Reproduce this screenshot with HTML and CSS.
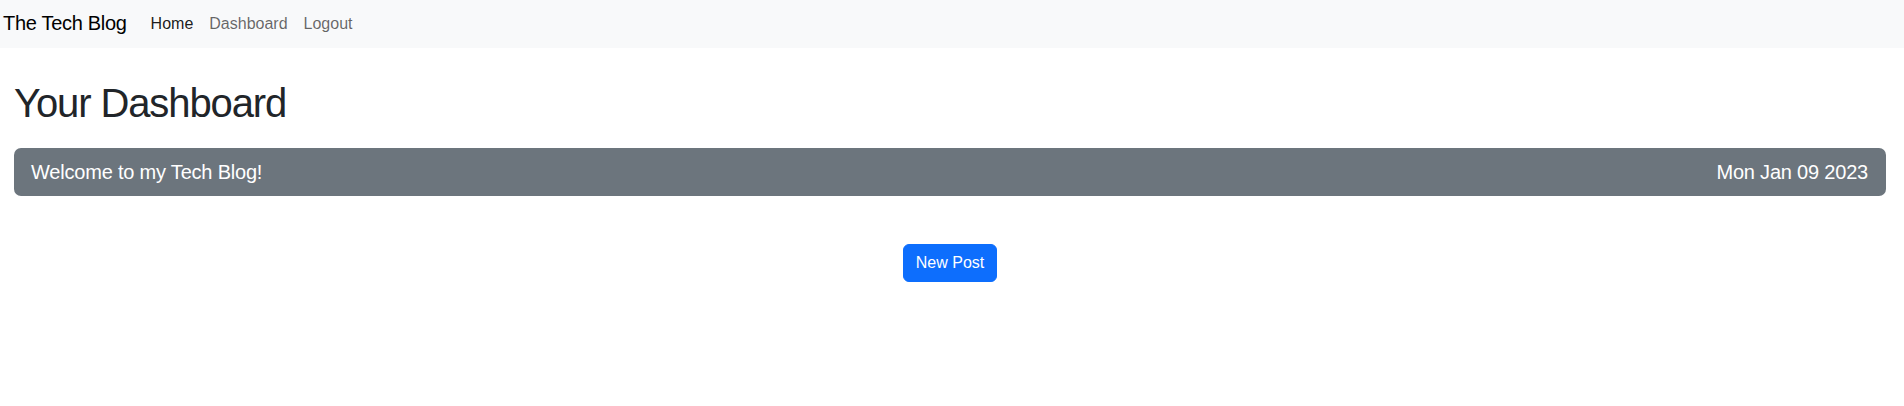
FILE: index.html
```html
<!DOCTYPE html>
<html lang="en">
<head>
<meta charset="utf-8">
<title>The Tech Blog</title>
<link rel="stylesheet" href="styles.css">
</head>
<body>
<nav class="navbar">
  <a class="brand" href="#">The Tech Blog</a>
  <ul class="nav">
    <li><a class="nav-link active" href="#">Home</a></li>
    <li><a class="nav-link" href="#">Dashboard</a></li>
    <li><a class="nav-link" href="#">Logout</a></li>
  </ul>
</nav>
<main class="main">
  <h1 class="title">Your Dashboard</h1>
  <div class="post-bar">
    <span>Welcome to my Tech Blog!</span>
    <span>Mon Jan 09 2023</span>
  </div>
  <div class="actions">
    <button class="btn" type="button">New Post</button>
  </div>
</main>
</body>
</html>
```

FILE: styles.css
```css
* { box-sizing: border-box; }
html, body { margin: 0; padding: 0; }
body {
  font-family: "Liberation Sans", Arial, sans-serif;
  font-size: 16px;
  line-height: 1.5;
  color: #212529;
  background: #fff;
}
.navbar {
  height: 48px;
  background: #f8f9fa;
  display: flex;
  align-items: center;
  padding: 0 0 0 3px;
}
.brand {
  font-size: 20px;
  color: #000;
  text-decoration: none;
  margin-right: 16px;
  margin-top: -2px;
  letter-spacing: -0.3px;
}
.nav {
  list-style: none;
  margin: 0;
  padding: 0;
  display: flex;
}
.nav-link {
  display: block;
  padding: 8px;
  color: rgba(0, 0, 0, 0.6);
  text-decoration: none;
  font-size: 16px;
}
.nav-link.active { color: rgba(0, 0, 0, 0.9); }
.main {
  padding: 0 18px 0 14px;
}
.title {
  margin: 31px 0 21px;
  font-size: 40px;
  font-weight: 400;
  line-height: 1.2;
  letter-spacing: -1.1px;
}
.post-bar {
  height: 48px;
  display: flex;
  align-items: center;
  justify-content: space-between;
  padding: 0 18px 0 17px;
  background: #6c757d;
  color: #fff;
  border-radius: 7px;
  font-size: 20px;
  letter-spacing: -0.2px;
}
.actions {
  display: flex;
  justify-content: center;
  margin-top: 48px;
}
.btn {
  font-family: inherit;
  font-size: 16px;
  line-height: 24px;
  padding: 6px 12px;
  border: 1px solid #0d6efd;
  background: #0d6efd;
  color: #fff;
  border-radius: 6px;
  cursor: pointer;
}
```
